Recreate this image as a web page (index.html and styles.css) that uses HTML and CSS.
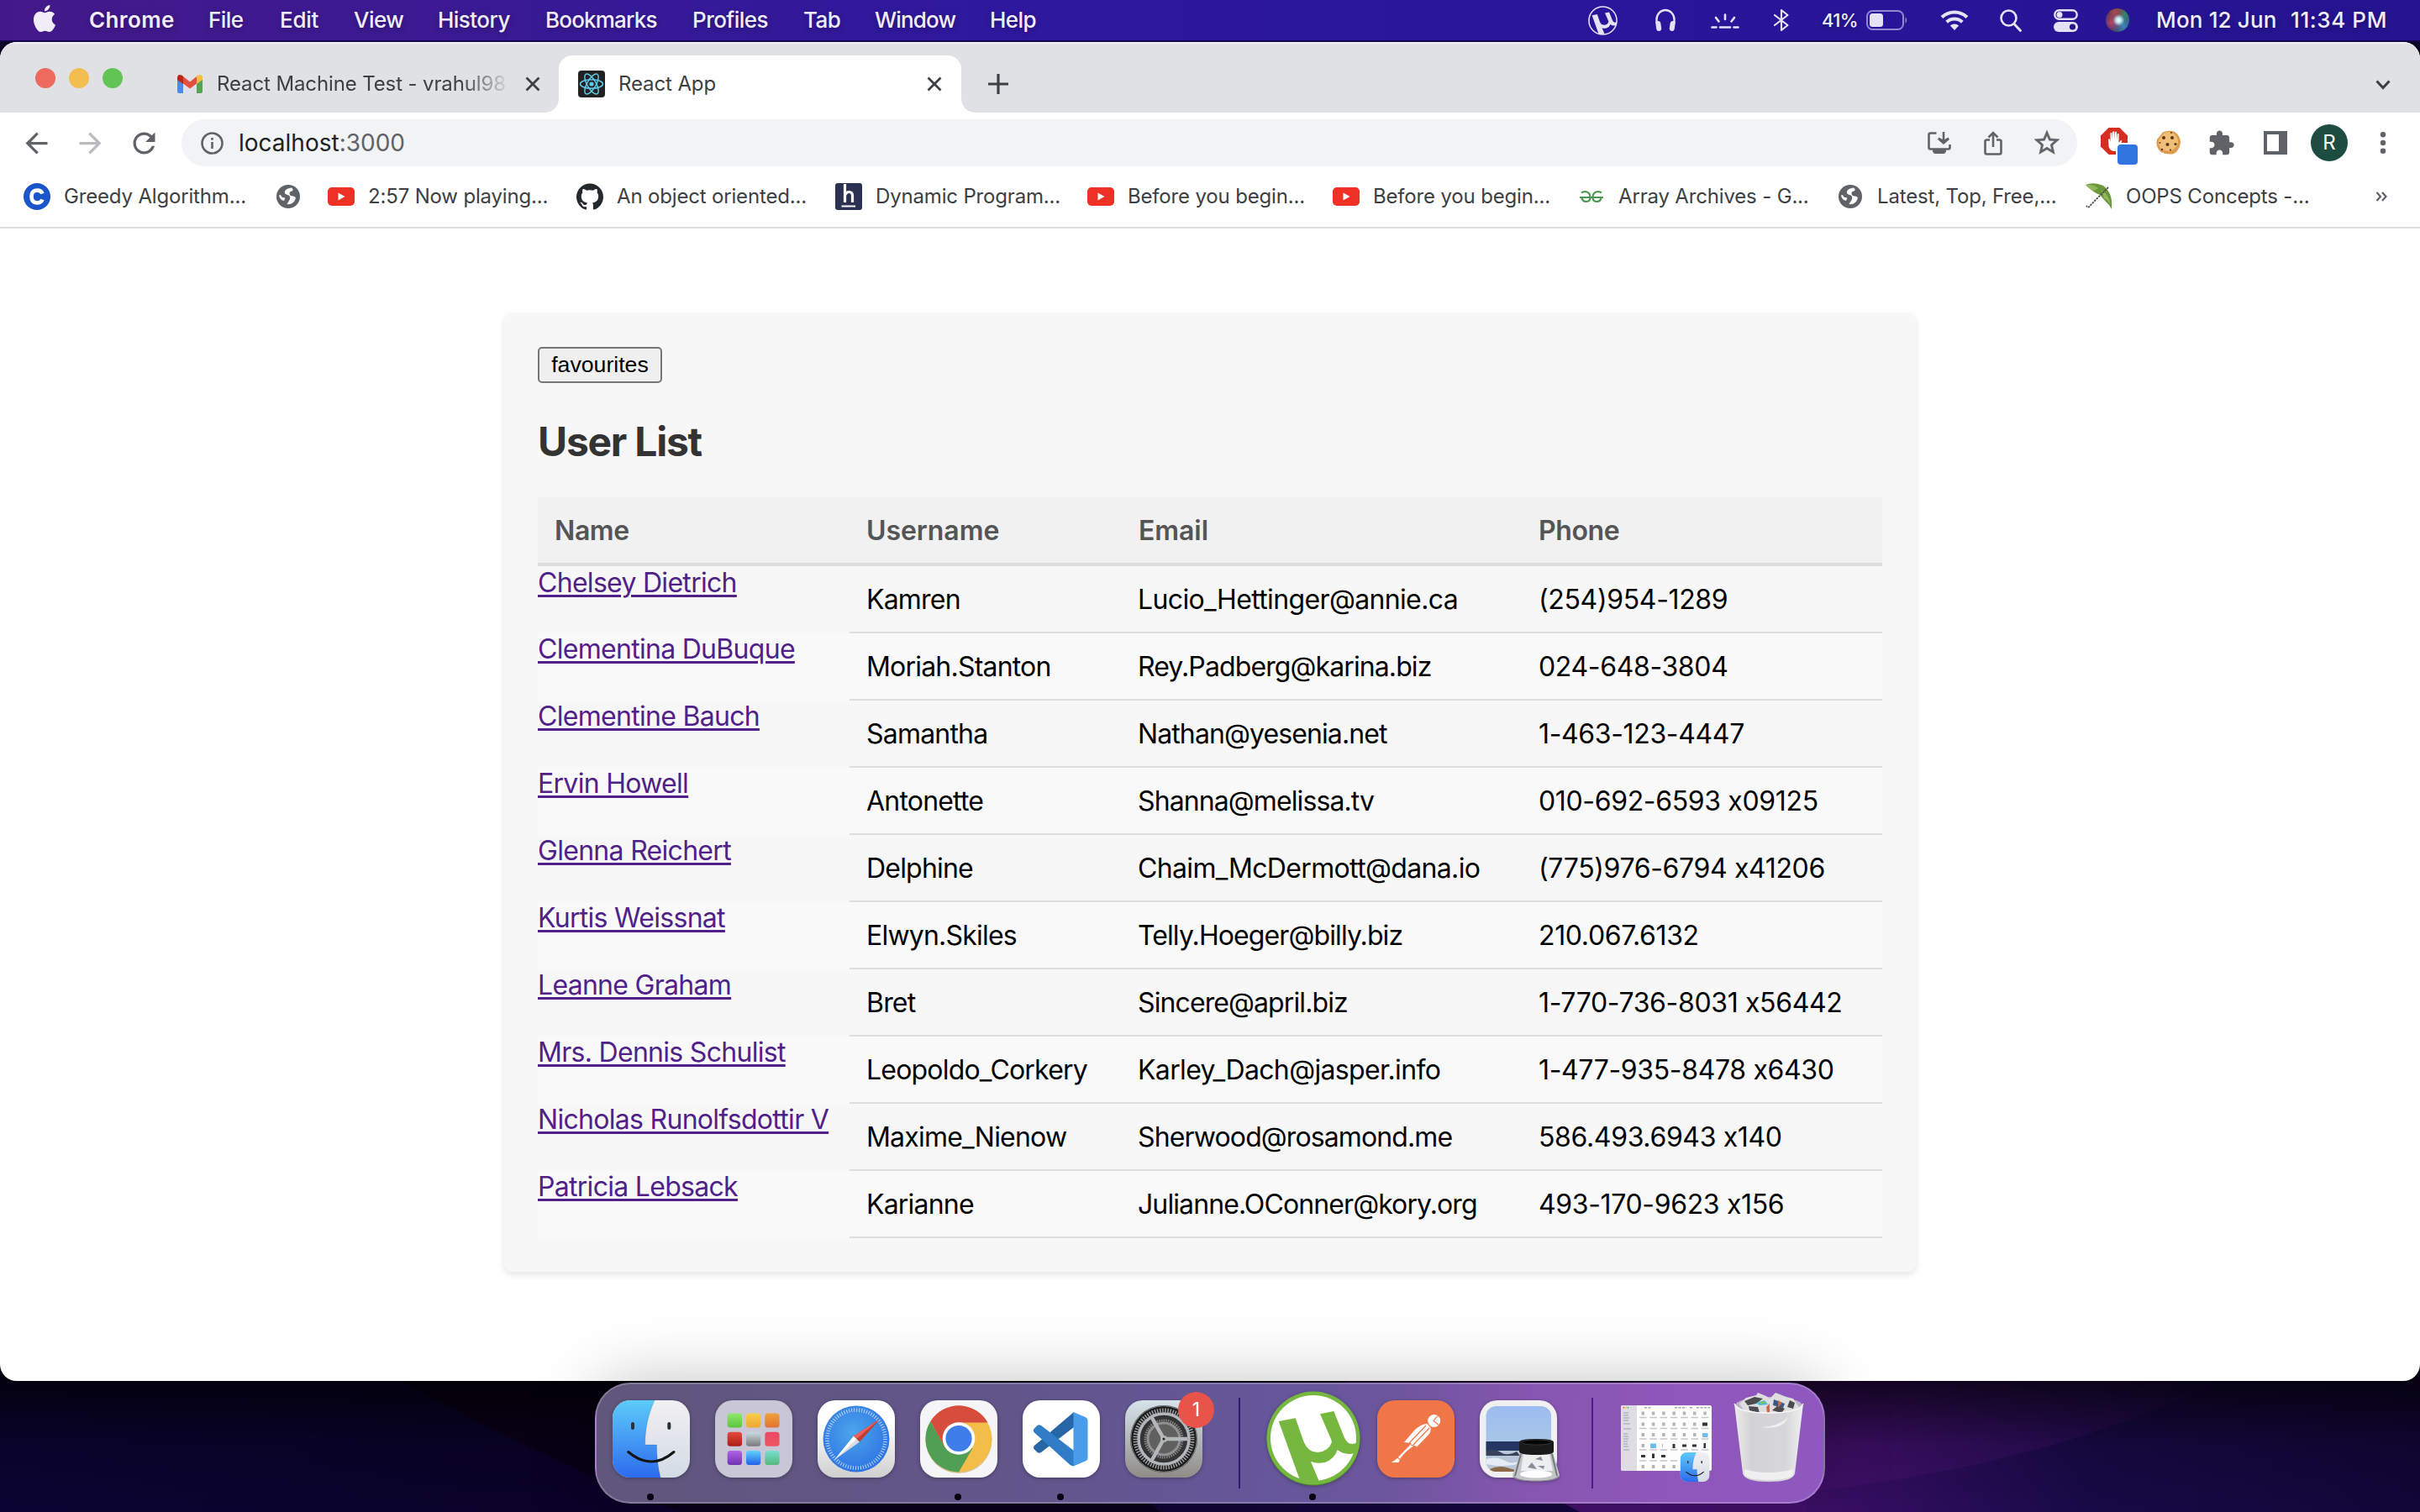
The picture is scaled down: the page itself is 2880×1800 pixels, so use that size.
FILE: index.html
```html
<!DOCTYPE html>
<html lang="en">
<head>
<meta charset="utf-8">
<title>React App</title>
<link rel="stylesheet" href="styles.css">
</head>
<body>
<svg class="defs" width="0" height="0" aria-hidden="true">
  <defs>
    <linearGradient id="gFinderBlue" x1="0" y1="0" x2="0" y2="1"><stop offset="0" stop-color="#5ccbfa"/><stop offset="1" stop-color="#2d6bee"/></linearGradient>
    <linearGradient id="gFinderWhite" x1="0" y1="0" x2="0" y2="1"><stop offset="0" stop-color="#f1f0f2"/><stop offset="1" stop-color="#d3dbe6"/></linearGradient>
    <linearGradient id="gSafariPlate" x1="0" y1="0" x2="0" y2="1"><stop offset=".3" stop-color="#fff"/><stop offset="1" stop-color="#cfcfcf"/></linearGradient>
    <radialGradient id="gSafari" cx=".45" cy=".4" r=".6"><stop offset="0" stop-color="#4ba6ec"/><stop offset="1" stop-color="#2f74e2"/></radialGradient>
    <linearGradient id="gSettings" x1="0" y1="0" x2="0" y2="1"><stop offset="0" stop-color="#d6e3ea"/><stop offset="1" stop-color="#8f8c88"/></linearGradient>
    <linearGradient id="gSky" x1="0" y1="0" x2="0" y2="1"><stop offset="0" stop-color="#9cbcf1"/><stop offset="1" stop-color="#a9c6e6"/></linearGradient>
    <linearGradient id="gTrash" x1="0" y1="0" x2="1" y2="0"><stop offset="0" stop-color="#ececec"/><stop offset=".25" stop-color="#d3d2d4"/><stop offset=".75" stop-color="#d7d6d8"/><stop offset="1" stop-color="#f0f0f1"/></linearGradient>
    <linearGradient id="l1" x1="0" y1="0" x2="0" y2="1"><stop offset="0" stop-color="#8fe96a"/><stop offset="1" stop-color="#5cc53c"/></linearGradient>
    <linearGradient id="l2" x1="0" y1="0" x2="0" y2="1"><stop offset="0" stop-color="#f7cd4b"/><stop offset="1" stop-color="#f0a733"/></linearGradient>
    <linearGradient id="l3" x1="0" y1="0" x2="0" y2="1"><stop offset="0" stop-color="#eea23c"/><stop offset="1" stop-color="#df7433"/></linearGradient>
    <linearGradient id="l4" x1="0" y1="0" x2="0" y2="1"><stop offset="0" stop-color="#e64a3b"/><stop offset="1" stop-color="#a91f16"/></linearGradient>
    <linearGradient id="l5" x1="0" y1="0" x2="0" y2="1"><stop offset="0" stop-color="#cddae3"/><stop offset="1" stop-color="#77797b"/></linearGradient>
    <linearGradient id="l6" x1="0" y1="0" x2="0" y2="1"><stop offset="0" stop-color="#ea4866"/><stop offset="1" stop-color="#ee5560"/></linearGradient>
    <linearGradient id="l7" x1="0" y1="0" x2="0" y2="1"><stop offset="0" stop-color="#b263e6"/><stop offset="1" stop-color="#7130b4"/></linearGradient>
    <linearGradient id="l8" x1="0" y1="0" x2="0" y2="1"><stop offset="0" stop-color="#60d2fa"/><stop offset="1" stop-color="#2260ea"/></linearGradient>
    <linearGradient id="l9" x1="0" y1="0" x2="0" y2="1"><stop offset="0" stop-color="#7adfcf"/><stop offset="1" stop-color="#53b97c"/></linearGradient>
    <clipPath id="plate"><rect width="92" height="92" rx="21"/></clipPath>
    <clipPath id="photo"><rect x="7.500" y="7" width="77.500" height="78" rx="12"/></clipPath>
    <symbol id="finder" viewBox="0 0 92 92">
      <g clip-path="url(#plate)">
        <rect width="92" height="92" fill="url(#gFinderWhite)"/>
        <path d="M0 0H50C42 18 38.700 35 38.700 53H52.500C52.500 67 54 80 57 92H0Z" fill="url(#gFinderBlue)"/>
        <path d="M50 0C42 18 38.700 35 38.700 53H52.500C52.500 67 54 80 57 92" fill="none" stroke="#000" stroke-opacity=".12"/>
      </g>
      <path d="M24 28V33M67.300 28V33" stroke="#2a3038" stroke-width="4" stroke-linecap="round"/>
      <path d="M18.700 61.500Q46 84.500 73 61.500" fill="none" stroke="#141414" stroke-width="3" stroke-linecap="round"/>
    </symbol>
    <symbol id="mu" viewBox="0 0 112 112">
      <path d="M14.700 36L34.700 32.300L44.700 60.700Q50 73 61 73Q74 72 78 60.700L77 57L64 27.300L80.300 24L92.300 54Q96 63 102 63L108 62Q108 68 105 74Q94 77 84.700 70Q81 81 69.700 85Q60 87 53 84L63 108L40 106Z"/>
    </symbol>
    <symbol id="youtube" viewBox="0 0 32 32">
      <rect y="5" width="32" height="22" rx="5" fill="#ee3124"/><path d="M12.500 11.500V20.500L20.500 16Z" fill="#fff"/>
    </symbol>
    <symbol id="globe" viewBox="0 0 32 32">
      <circle cx="15" cy="16" r="14" fill="#5f6368"/>
      <path d="M19 5.500Q13 6 11 9.500Q10 13 14 14Q18 14.500 17 19L13.500 25Q21 26 23.500 19Q25 16 20.500 15.500Q16.500 15.500 16.500 12Q16.500 10 19.500 9.500Q22 8 19 5.500ZM4 14.500Q5 20 10 21L11.500 17.500Q7 17.500 6 14Z" fill="#fff"/>
    </symbol>
  </defs>
</svg>

<header class="menubar">
  <nav class="menus">
    <svg class="apple" viewBox="0 0 24 24"><path d="M12.152 6.896c-.948 0-2.415-1.078-3.960-1.040-2.040.027-3.910 1.183-4.961 3.014-2.117 3.675-.546 9.103 1.519 12.090 1.013 1.454 2.208 3.090 3.792 3.039 1.520-.065 2.090-.987 3.935-.987 1.831 0 2.350.987 3.960.948 1.637-.026 2.676-1.480 3.676-2.948 1.156-1.688 1.636-3.325 1.662-3.415-.039-.013-3.182-1.221-3.220-4.857-.026-3.040 2.480-4.494 2.597-4.559-1.429-2.090-3.623-2.324-4.390-2.376-2-.156-3.675 1.090-4.610 1.090zM15.530 3.830c.843-1.012 1.400-2.427 1.245-3.830-1.207.052-2.662.805-3.532 1.818-.780.896-1.454 2.338-1.273 3.714 1.338.104 2.715-.688 3.559-1.701"/></svg>
    <b>Chrome</b><span>File</span><span class="loose">Edit</span><span>View</span><span>History</span><span class="tight">Bookmarks</span><span>Profiles</span><span>Tab</span><span class="tight">Window</span><span>Help</span>
  </nav>
  <div class="status">
    <svg class="s-mu" viewBox="0 0 112 112"><circle cx="56" cy="56" r="53" fill="none" stroke="#e6e2f5" stroke-width="5"/><use href="#mu" width="112" height="112"/></svg>
    <svg class="s-head" viewBox="0 0 28 28"><path d="M3.500 18V13A10.500 11 0 0 1 24.500 13V18" fill="none" stroke="#e6e2f5" stroke-width="2.400"/><rect x="2.800" y="15" width="6" height="12" rx="3" transform="rotate(-8 6 21)"/><rect x="19.200" y="15" width="6" height="12" rx="3" transform="rotate(8 22 21)"/></svg>
    <svg class="s-key" viewBox="0 0 34 20"><path d="M17 1.500V7M6 5L9.500 9.500M28 5L24.500 9.500M1.500 16.500H6.500M11 16.500H23M27.500 16.500H32.500" fill="none" stroke="#e6e2f5" stroke-width="2.600" stroke-linecap="round"/></svg>
    <svg class="s-bt" viewBox="0 0 20 28"><path d="M2 8L17.500 20L10 26V2L17.500 8L2 20" fill="none" stroke="#e6e2f5" stroke-width="2.200" stroke-linejoin="round" stroke-linecap="round"/></svg>
    <span class="pct">41%</span>
    <svg class="s-bat" viewBox="0 0 50 24"><rect x="1" y="1" width="43" height="22" rx="6.500" fill="none" stroke="#9387cf" stroke-width="2"/><rect x="4" y="4" width="16" height="16" rx="3.500"/><path d="M46.500 8Q50 12 46.500 16Z" fill="#9387cf"/></svg>
    <svg class="s-wifi" viewBox="0 0 34 26"><g fill="none" stroke="#e6e2f5" stroke-width="4"><path d="M2 9.500A21.500 21.500 0 0 1 32 9.500"/><path d="M7.700 15.300A13.500 13.500 0 0 1 26.300 15.300"/></g><path d="M17 25L11.800 19.600A7.500 7.500 0 0 1 22.200 19.600Z"/></svg>
    <svg class="s-find" viewBox="0 0 26 27"><circle cx="10.500" cy="10.500" r="9" fill="none" stroke="#e6e2f5" stroke-width="2.600"/><path d="M17 17.500L24.500 25.500" stroke="#e6e2f5" stroke-width="3" stroke-linecap="round"/></svg>
    <svg class="s-cc" viewBox="0 0 29 27"><rect x="1.300" y="1.300" width="26.400" height="10.400" rx="5.200" fill="none" stroke="#e6e2f5" stroke-width="2.400"/><circle cx="7" cy="6.500" r="3.500"/><rect y="15" width="29" height="12" rx="6"/><circle cx="22.500" cy="21" r="3.600" fill="#26158f"/></svg>
    <span class="siri"></span>
    <span class="date">Mon 12 Jun</span><span class="time">11:34 PM</span>
  </div>
</header>

<main class="window">
  <div class="tabstrip">
    <div class="lights"><i class="red"></i><i class="yellow"></i><i class="green"></i></div>
    <div class="tab">
      <svg class="gmail" viewBox="0 0 30 22"><path d="M0 3V20Q0 22 2 22H7V10Z" fill="#4e87ee"/><path d="M30 3V20Q30 22 28 22H23V10Z" fill="#53a551"/><path d="M0 4V3Q1-2 6 1L7 2V11L0 6Z" fill="#b9271b"/><path d="M7 2L15 8.500L23 2V10.500L15 16.500L7 10.500Z" fill="#e34e3e"/><path d="M30 4V3Q29-2 24 1L23 2V11L30 6Z" fill="#f4bd3f"/></svg>
      <span class="tab-title faded">React Machine Test - vrahul98</span>
      <svg class="close" viewBox="0 0 18 18"><path d="M1.500 1.500L16.500 16.500M16.500 1.500L1.500 16.500"/></svg>
    </div>
    <div class="tab active">
      <svg class="react" viewBox="0 0 32 32"><rect width="32" height="32" rx="4" fill="#222"/><g fill="none" stroke="#61c9e8" stroke-width="1.500"><ellipse cx="16" cy="16" rx="13.500" ry="5.200" transform="rotate(0 16 16)"/><ellipse cx="16" cy="16" rx="13.500" ry="5.200" transform="rotate(60 16 16)"/><ellipse cx="16" cy="16" rx="13.500" ry="5.200" transform="rotate(120 16 16)"/></g><circle cx="16" cy="16" r="2.600" fill="#61c9e8"/></svg>
      <span class="tab-title">React App</span>
      <svg class="close" viewBox="0 0 18 18"><path d="M1.500 1.500L16.500 16.500M16.500 1.500L1.500 16.500"/></svg>
    </div>
    <svg class="plus" viewBox="0 0 24 24"><path d="M12 0V24M0 12H24" stroke="#3c4043" stroke-width="3.200"/></svg>
    <svg class="chevron" viewBox="0 0 18 12"><path d="M1.500 1.500L9 9.500L16.500 1.500" fill="none" stroke="#3c4043" stroke-width="3"/></svg>
  </div>

  <div class="toolbar">
    <svg class="nav" viewBox="0 0 24 24"><path d="M20 11H7.830l5.590-5.590L12 4l-8 8 8 8 1.410-1.410L7.830 13H20v-2z"/></svg>
    <svg class="nav disabled" viewBox="0 0 24 24"><path d="M4 11H16.170l-5.590-5.590L12 4l8 8-8 8-1.410-1.410L16.170 13H4v-2z"/></svg>
    <svg class="nav" viewBox="0 0 24 24"><path d="M17.650 6.350C16.200 4.900 14.210 4 12 4c-4.420 0-7.990 3.580-7.990 8s3.570 8 7.990 8c3.730 0 6.840-2.550 7.730-6h-2.080c-.820 2.330-3.040 4-5.650 4-3.310 0-6-2.690-6-6s2.690-6 6-6c1.660 0 3.140.690 4.220 1.780L13 11h7V4l-2.350 2.350z"/></svg>
    <div class="omnibox">
      <svg class="info" viewBox="0 0 27 27"><circle cx="13.500" cy="13.500" r="12" fill="none" stroke="#5f6368" stroke-width="2.600"/><path d="M13.500 12V20M13.500 7V9.800" stroke="#5f6368" stroke-width="2.600"/></svg>
      <span class="url">localhost<span>:3000</span></span>
      <svg class="o-install" viewBox="0 0 28 26"><path d="M10.500 1.500H3.500Q1.500 1.500 1.500 3.500V18.500Q1.500 20.500 3.500 20.500H24.500Q26.500 20.500 26.500 18.500V15" fill="none" stroke="#5f6368" stroke-width="2.600"/><path d="M6 21H22V23.500L20 26H8L6 23.500ZM17.700 0H20.300V9L24.500 6.500L26 9L19 15L12 9L13.500 6.500L17.700 9Z" fill="#5f6368"/></svg>
      <svg class="o-share" viewBox="0 0 22 29"><path d="M7 10.500H3.500Q1.500 10.500 1.500 12.500V25.500Q1.500 27.500 3.500 27.500H18.500Q20.500 27.500 20.500 25.500V12.500Q20.500 10.500 18.500 10.500H15M11 19V3M5.500 7.500L11 2L16.500 7.500" fill="none" stroke="#5f6368" stroke-width="2.600"/></svg>
      <svg class="o-star" viewBox="0 0 24 24"><path d="M22 9.240l-7.190-.620L12 2 9.190 8.630 2 9.240l5.460 4.730L5.820 21 12 17.270 18.180 21l-1.630-7.030L22 9.240zM12 15.400l-3.760 2.270 1-4.280-3.320-2.880 4.380-.380L12 6.100l1.710 4.040 4.380.380-3.320 2.880 1 4.280L12 15.400z" fill="#5f6368" stroke="#5f6368" stroke-width=".3"/></svg>
    </div>
    <svg class="e-abp" viewBox="0 0 44 44"><path d="M9.500 0H22.500L32 9.500V22.500L22.500 32H9.500L0 22.500V9.500Z" fill="#d52e20"/><path d="M9 14Q10 12.500 11 14L11.500 17V6.500Q12.600 5 13.500 6.500V14.500L14.200 4.800Q15.300 3.500 16.300 4.800V14.500L17 5.200Q18 4 19 5.200V15L19.700 7.500Q20.800 6 21.600 7.500V18L23.500 15.500Q25 14.500 25.300 16L21.500 25Q20 28 16 28Q10.500 27.500 9.500 22Z" fill="#fff"/><rect x="18" y="18" width="28" height="28" rx="4" fill="#fff"/><rect x="20" y="20" width="24" height="24" rx="4" fill="#3175e0"/></svg>
    <svg class="e-cookie" viewBox="0 0 30 28"><path d="M8 1.500Q15-1.500 22 1Q29 6 29 14Q27 24 21 27Q13 29 5 24.500Q-1 18 1 10Z" fill="#dd9a4d"/><path d="M9 2.500Q15 0 20.500 2.500Q27 8 26 14Q23 22 18 23.500Q11 25 5.500 21Q1.500 15 3.500 10Z" fill="#efbf78"/><g fill="#5b3317"><circle cx="9" cy="8" r="2"/><circle cx="19" cy="8" r="2"/><circle cx="13.500" cy="16" r="2"/><circle cx="23" cy="15.500" r="1.600"/><circle cx="7" cy="22" r="1.200"/><circle cx="4.500" cy="14" r=".9"/><circle cx="17" cy="22.500" r="1.100"/><circle cx="18" cy="2" r="1"/></g></svg>
    <svg class="e-puzzle" viewBox="0 0 24 24"><path d="M20.500 11H19V7c0-1.100-.900-2-2-2h-4V3.500C13 2.120 11.880 1 10.500 1S8 2.120 8 3.500V5H4c-1.100 0-1.990.900-1.990 2v3.800H3.500c1.490 0 2.700 1.210 2.700 2.700s-1.210 2.700-2.700 2.700H2V20c0 1.100.900 2 2 2h3.800v-1.500c0-1.490 1.210-2.700 2.700-2.700 1.490 0 2.700 1.210 2.700 2.700V22H17c1.100 0 2-.900 2-2v-4h1.500c1.380 0 2.500-1.120 2.500-2.500S21.880 11 20.500 11z" fill="#5f6368"/></svg>
    <svg class="e-panel" viewBox="0 0 28 28"><path d="M0 0H28V28H0ZM4 4V24H18V4Z" fill="#5f6368" fill-rule="evenodd"/></svg>
    <span class="avatar">R</span>
    <svg class="e-more" viewBox="0 0 8 26"><g fill="#5f6368"><circle cx="4" cy="3.300" r="3.200"/><circle cx="4" cy="13" r="3.200"/><circle cx="4" cy="22.700" r="3.200"/></g></svg>
  </div>

  <div class="bookmarks">
    <div class="bm"><svg viewBox="0 0 32 32"><circle cx="16" cy="16" r="16" fill="#1a56c9"/><path d="M22.500 12.500Q21 8.500 16 8.500Q9.500 9 9.500 16Q9.500 23 16 23.500Q21 23.500 22.500 19.500" fill="none" stroke="#fff" stroke-width="4.600"/></svg><span>Greedy Algorithm...</span></div>
    <div class="bm"><svg viewBox="0 0 32 32"><use href="#globe"/></svg></div>
    <div class="bm"><svg viewBox="0 0 32 32"><use href="#youtube"/></svg><span>2:57 Now playing...</span></div>
    <div class="bm"><svg viewBox="0 0 24 24"><path fill="#24292e" d="M12 .297c-6.630 0-12 5.373-12 12 0 5.303 3.438 9.800 8.205 11.385.6.113.820-.258.820-.577 0-.285-.010-1.040-.015-2.040-3.338.724-4.042-1.610-4.042-1.610C4.422 18.070 3.633 17.700 3.633 17.700c-1.087-.744.084-.729.084-.729 1.205.084 1.838 1.236 1.838 1.236 1.070 1.835 2.809 1.305 3.495.998.108-.776.417-1.305.760-1.605-2.665-.3-5.466-1.332-5.466-5.930 0-1.310.465-2.380 1.235-3.220-.135-.303-.540-1.523.105-3.176 0 0 1.005-.322 3.300 1.230.960-.267 1.980-.399 3-.405 1.020.006 2.040.138 3 .405 2.280-1.552 3.285-1.230 3.285-1.230.645 1.653.240 2.873.120 3.176.765.840 1.230 1.910 1.230 3.220 0 4.610-2.805 5.625-5.475 5.920.420.360.810 1.096.810 2.220 0 1.606-.015 2.896-.015 3.286 0 .315.210.690.825.570C20.565 22.092 24 17.592 24 12.297c0-6.627-5.373-12-12-12"/></svg><span>An object oriented...</span></div>
    <div class="bm"><svg viewBox="0 0 32 32"><rect width="32" height="32" rx="3" fill="#2b3152"/><path d="M11.500 1V23M11.500 14.500Q13 10.500 16.500 10.500Q20.500 10.500 20.500 15V23" fill="none" stroke="#fff" stroke-width="3.200"/><path d="M7.500 27.500H24" stroke="#fff" stroke-width="2.200"/></svg><span>Dynamic Program...</span></div>
    <div class="bm"><svg viewBox="0 0 32 32"><use href="#youtube"/></svg><span>Before you begin...</span></div>
    <div class="bm"><svg viewBox="0 0 32 32"><use href="#youtube"/></svg><span>Before you begin...</span></div>
    <div class="bm"><svg viewBox="0 0 32 32"><g fill="none" stroke="#4c9852" stroke-width="2.200"><path d="M4 11.500Q7 9.500 10.500 10.500Q14.500 12 14.500 17Q14.500 22 9.500 22Q5 21.500 4.500 17.500M28 11.500Q25 9.500 21.500 10.500Q17.500 12 17.500 17Q17.500 22 22.500 22Q27 21.500 27.500 17.500M2 17H30"/></g></svg><span>Array Archives - G...</span></div>
    <div class="bm"><svg viewBox="0 0 32 32"><use href="#globe" x="1"/></svg><span>Latest, Top, Free,...</span></div>
    <div class="bm"><svg viewBox="0 0 32 32"><path d="M0 2Q10-2 21 3Q33 12 31 31Q28 25 24 22L17 14Q9 11 0 2Z" fill="#6b9838"/><path d="M0 2Q8 1 15 6Q12 8 10 9Q4 7 0 2ZM19 8Q28 15 30 26Q27 20 22 18Z" fill="#94b75e"/><path d="M27 5L7 25Q3 31 1 27" fill="none" stroke="#4b4b4b" stroke-width="1.800" stroke-dasharray="2.500 1"/></svg><span>OOPS Concepts -...</span></div>
    <svg class="more" viewBox="0 0 14 12"><path d="M1.500 1L6 6L1.500 11M8 1L12.500 6L8 11" fill="none" stroke="#5f6368" stroke-width="2.200"/></svg>
  </div>

  <section class="page">
    <div class="card">
      <button class="fav">favourites</button>
      <h2>User List</h2>
      <table>
        <colgroup><col class="c-name"><col class="c-user"><col class="c-mail"><col class="c-phone"></colgroup>
        <thead><tr><th class="snug">Name</th><th>Username</th><th>Email</th><th class="snug">Phone</th></tr></thead>
        <tbody>
          <tr><td><a href="#">Chelsey Dietrich</a></td><td>Kamren</td><td class="wide">Lucio_Hettinger@annie.ca</td><td>(254)954-1289</td></tr>
          <tr><td><a href="#">Clementina DuBuque</a></td><td>Moriah.Stanton</td><td>Rey.Padberg@karina.biz</td><td>024-648-3804</td></tr>
          <tr><td><a href="#">Clementine Bauch</a></td><td>Samantha</td><td>Nathan@yesenia.net</td><td>1-463-123-4447</td></tr>
          <tr><td><a href="#">Ervin Howell</a></td><td>Antonette</td><td>Shanna@melissa.tv</td><td>010-692-6593 x09125</td></tr>
          <tr><td><a href="#">Glenna Reichert</a></td><td>Delphine</td><td class="wide">Chaim_McDermott@dana.io</td><td>(775)976-6794 x41206</td></tr>
          <tr><td><a href="#">Kurtis Weissnat</a></td><td>Elwyn.Skiles</td><td>Telly.Hoeger@billy.biz</td><td>210.067.6132</td></tr>
          <tr><td><a href="#">Leanne Graham</a></td><td>Bret</td><td>Sincere@april.biz</td><td>1-770-736-8031 x56442</td></tr>
          <tr><td><a href="#">Mrs. Dennis Schulist</a></td><td>Leopoldo_Corkery</td><td class="wide">Karley_Dach@jasper.info</td><td>1-477-935-8478 x6430</td></tr>
          <tr><td><a href="#">Nicholas Runolfsdottir V</a></td><td>Maxime_Nienow</td><td>Sherwood@rosamond.me</td><td>586.493.6943 x140</td></tr>
          <tr><td><a href="#">Patricia Lebsack</a></td><td>Karianne</td><td>Julianne.OConner@kory.org</td><td>493-170-9623 x156</td></tr>
        </tbody>
      </table>
    </div>
  </section>
</main>

<footer class="desktop">
  <svg class="wallpaper" viewBox="0 0 2880 176" preserveAspectRatio="none">
    <defs>
      <linearGradient id="w1" x1="0" x2="1" y1="0" y2="0"><stop offset="0" stop-color="#0b0433"/><stop offset=".25" stop-color="#0a0228"/><stop offset=".6" stop-color="#160640"/><stop offset="1" stop-color="#120639"/></linearGradient>
      <linearGradient id="w2" x1="0" x2="1" y1="0" y2="0"><stop offset="0" stop-color="#4a1173"/><stop offset=".55" stop-color="#43106d"/><stop offset=".75" stop-color="#2f0e5c"/><stop offset="1" stop-color="#1a0946"/></linearGradient>
      <linearGradient id="w3" gradientUnits="userSpaceOnUse" x1="2150" x2="2880" y1="0" y2="0"><stop offset="0" stop-color="#3d0f69"/><stop offset=".2" stop-color="#2b0d5a"/><stop offset=".45" stop-color="#180a47"/><stop offset="1" stop-color="#110637"/></linearGradient>
      <linearGradient id="w4" x1="0" x2="0" y1="0" y2="1"><stop offset=".1" stop-color="#000" stop-opacity=".7"/><stop offset=".55" stop-color="#000" stop-opacity=".15"/><stop offset="1" stop-color="#000" stop-opacity="0"/></linearGradient>
    </defs>
    <rect width="2880" height="176" fill="url(#w1)"/>
    <path d="M478 20Q640 110 810 176H1380L1200 20Z" fill="#080119"/>
    <path d="M1600 20H2640V176H1880Z" fill="url(#w2)"/>
    <path d="M2640 20Q2440 120 2150 152V176H2880V20Z" fill="url(#w3)"/>
    <rect width="2880" height="176" fill="url(#w4)"/>
  </svg>
  <div class="dock">
    <div class="app running"><svg viewBox="0 0 92 92"><use href="#finder"/></svg></div>
    <div class="app"><svg viewBox="0 0 92 92"><rect width="92" height="92" rx="21" fill="#c9c6d5"/>
      <rect x="14.700" y="15.500" width="17.300" height="17" rx="3.500" fill="url(#l1)"/><rect x="37" y="15.500" width="17.300" height="17" rx="3.500" fill="url(#l2)"/><rect x="59.300" y="15.500" width="17.300" height="17" rx="3.500" fill="url(#l3)"/>
      <rect x="14.700" y="37.800" width="17.300" height="17" rx="3.500" fill="url(#l4)"/><rect x="37" y="37.800" width="17.300" height="17" rx="3.500" fill="url(#l5)"/><rect x="59.300" y="37.800" width="17.300" height="17" rx="3.500" fill="url(#l6)"/>
      <rect x="14.700" y="60" width="17.300" height="17" rx="3.500" fill="url(#l7)"/><rect x="37" y="60" width="17.300" height="17" rx="3.500" fill="url(#l8)"/><rect x="59.300" y="60" width="17.300" height="17" rx="3.500" fill="url(#l9)"/></svg></div>
    <div class="app"><svg viewBox="0 0 92 92"><rect width="92" height="92" rx="21" fill="url(#gSafariPlate)"/><circle cx="46" cy="46" r="39.500" fill="url(#gSafari)"/><circle cx="46" cy="46" r="34.500" fill="none" stroke="#d5e8fb" stroke-width="4.500" stroke-dasharray="1 2.010" opacity=".85"/><path d="M20 71L43 42.500L50 49.500Z" fill="#d9dde2"/><path d="M20 71L43 42.500L46.500 46Z" fill="#fff"/><path d="M74 22.500L43 42.500L50 49.500Z" fill="#c13b2e"/><path d="M74 22.500L43 42.500L46.500 46Z" fill="#ee6058"/></svg></div>
    <div class="app running"><svg viewBox="0 0 92 92"><rect width="92" height="92" rx="21" fill="#f5f5f8"/><circle cx="46" cy="47.500" r="39.500" fill="#b9913a" opacity=".5"/><circle cx="46" cy="46" r="39.500" fill="#f3bd49"/><path d="M46 26.500H80.500A39.500 39.500 0 0 0 12.500 25L29 56L46 46Z" fill="#d64c3d"/><path d="M12.500 25A39.500 39.500 0 0 0 46 85.500L62.500 57L46 46L29.200 56Z" fill="#519f55"/><circle cx="46" cy="45.500" r="19.300" fill="#fff"/><circle cx="46" cy="45.500" r="15.600" fill="#3f7de9"/></svg></div>
    <div class="app running"><svg viewBox="0 0 92 92"><rect width="92" height="92" rx="21" fill="#fff"/><path d="M61 14L14 54Q12 56 13.500 58L17.500 62Q19.500 63.500 22 62L61 32Z" fill="#2666a6"/><path d="M22 30Q19.500 28.500 17.500 30L13.500 34Q12 36 14 38.500L56 76.500Q59 79 61 78V60Z" fill="#317cc6"/><path d="M60.500 14L75.500 20.500Q77.500 21.500 77.500 24V68.500Q77.500 71 75.500 72L60.500 78.500Z" fill="#489cea"/></svg></div>
    <div class="app"><svg viewBox="0 0 92 92"><rect width="92" height="92" rx="21" fill="url(#gSettings)"/><circle cx="46" cy="46" r="40" fill="#1c1c1c"/><circle cx="46" cy="46" r="39.300" fill="none" stroke="#c9cdd0" stroke-width="1" opacity=".6"/><circle cx="46" cy="46" r="34" fill="none" stroke="#9c9fa1" stroke-width="5" stroke-dasharray="1.500 1.600"/><circle cx="46" cy="46" r="30" fill="#343434" stroke="#b4b7b9" stroke-width="3.500"/><circle cx="46" cy="46" r="22" fill="none" stroke="#85878a" stroke-width="3" stroke-dasharray="1.500 1.200"/><circle cx="46" cy="46" r="19" fill="#60605e" stroke="#8f9193" stroke-width="3"/><path d="M46 46H74M46 46L32 21M46 46L32 71" stroke="#b4b7b9" stroke-width="4.500"/><circle cx="46" cy="46" r="4" fill="#b4b7b9"/><circle cx="46" cy="46" r="1.500" fill="#222"/></svg><span class="badge">1</span></div>
    <i class="sep"></i>
    <div class="app running torrent"><svg viewBox="0 0 112 112"><circle cx="56" cy="57" r="55.500" fill="#4b8f28"/><circle cx="56" cy="56" r="55.500" fill="#76b83f"/><circle cx="56" cy="56" r="51" fill="#fff"/><use href="#mu" width="112" height="112" fill="#76b83f"/></svg></div>
    <div class="app postman"><svg viewBox="0 0 92 92"><rect width="92" height="92" rx="21" fill="#f07648"/><g fill="#fff"><circle cx="67.700" cy="24.500" r="7.500"/><path d="M44 36Q52 28 59.300 28L63.700 33Q64 38 61 41L47 55.700L44 54Q34 60 27.700 69L25.500 74H17L22.700 70L39.300 53L41 51L32 50Z"/></g><path d="M73 17L67 24.500L74 30M58 30L38 51M62 33L43 53M40 53L48 56M24 68L28 71" stroke="#f07648" stroke-width="1.200" fill="none"/></svg></div>
    <div class="app"><svg viewBox="0 0 92 92"><rect width="92" height="92" rx="21" fill="#f0f0f1"/><g clip-path="url(#photo)"><rect x="7" y="7" width="79" height="43" fill="url(#gSky)"/><rect x="7" y="49" width="79" height="37" fill="#b9c7da"/><rect x="7" y="49" width="79" height="11" fill="#253563"/><path d="M7 60Q18 57 25 62T44 61L48 66H7Z" fill="#39425a"/><path d="M8 70Q20 66 30 72T48 70L46 76Q26 80 8 76Z" fill="#e8edf3"/><path d="M12 82Q22 77 32 80L46 84V87H12Z" fill="#8a6a48"/></g><path d="M48 62H87L95 89Q95 96 67 96Q39 96 39 89Z" fill="#c3c7ca"/><path d="M52 64H83L87 84H49Z" fill="#eceef0"/><path d="M49 64L42 90M86 64L92 90" stroke="#77797b" stroke-width="2"/><path d="M57 80L62 74L68 82ZM66 70L73 67L75 72ZM69 78L77 78L76 82Z" fill="#878e99"/><ellipse cx="67" cy="88" rx="19" ry="4.500" fill="#fff"/><path d="M40 90Q44 96 67 96Q90 96 94 90" fill="none" stroke="#8b8e90" stroke-width="1.200"/><path d="M47 50Q47 46 67.500 46Q88 46 88 50V61Q88 65 67.500 65Q47 65 47 61Z" fill="#1a1a1b"/><ellipse cx="67.500" cy="50" rx="18" ry="3" fill="#050505" stroke="#444" stroke-width=".7"/></svg></div>
    <i class="sep"></i>
    <svg class="thumb" viewBox="0 0 108 92"><rect width="108" height="78" rx="2" fill="#fdfdfd"/><path d="M2 0H19V78H2Q0 78 0 76V2Q0 0 2 0Z" fill="#dfdce3"/><circle cx="3.500" cy="2.700" r="1" fill="#ee6a5e"/><circle cx="6" cy="2.700" r="1" fill="#f5bd4f"/><circle cx="8.500" cy="2.700" r="1" fill="#61c554"/><path d="M28 2.700H36M64 2.700H78M82 2.700H86M90 2.700H106" stroke="#aaa" stroke-width="1.400" stroke-dasharray="3 1.500"/><path d="M3 9H9M3 12H9M3 15H10M3 18H9M3 22H11M3 28H12M3 34H8M3 37H9M3 40H9M3 43H8M3 46H8M3 49H9M3 53H10" stroke="#8fa2bd" stroke-width="1.200"/><g stroke="#b5b5b8" stroke-width="4" stroke-dasharray="3.500 8.800" fill="none"><path d="M24.500 9.500H106M24.500 22.500H98M24.500 35H98M24.500 48H50M24.500 73H68"/></g><g stroke="#c6c6ca" stroke-width="1.500" stroke-dasharray="8.500 3.800"><path d="M22 14.500H106M22 27.500H106M22 40H106M22 53H106M22 66H68"/></g><path d="M97 20.500H103V24.500H97ZM61.500 46H64.500V51H61.500ZM73 46.500H78V49.500H73ZM85 46.500H90V49.500H85ZM98.500 45H101V51H98.500ZM24 59H29V62H24ZM37 57.500H40V63H37ZM48 59H53V62H48Z" fill="#34343c"/><path d="M97 33H103.500V38H97ZM35 45.500H42V51H35Z" fill="#6fbdea"/><use href="#finder" x="70.600" y="56" width="35" height="35"/></svg>
    <svg class="trash" viewBox="0 0 82 108"><ellipse cx="41" cy="16" rx="40" ry="10" fill="#bfb2cc"/><path d="M6 14L14 7L26 4L28 1L38 5L42 8L49 1L62 6L70 8L77 18L70 26H14Z" fill="#dededf"/><path d="M12 11L24 6L34 8L26 14L16 16ZM17 17L28 18L30 25L18 22ZM45 22L52 16L60 20L56 25ZM66 10L72 13L70 20L63 18Z" fill="#4b4b50"/><path d="M26 13L36 10L40 15L30 16Z" fill="#4bbbe0"/><path d="M47 9L60 14L58 19L46 16Z" fill="#3a558f"/><path d="M52 10L57 13L52 19Z" fill="#c96a3d"/><path d="M30 12L37 11L34 15Z" fill="#7cc455"/><path d="M38 18L42 14V25L39 25Z" fill="#d9634b"/><path d="M0 14Q4 25 41 25Q78 25 82 14L72 97Q70 107 41 107Q12 107 10 97Z" fill="url(#gTrash)"/><path d="M30 42Q52 42 64 30Q58 46 30 42Z" fill="#f0f0f1"/><path d="M12 92Q40 100 70 92L70 98Q66 105 41 105Q14 105 12 98Z" fill="#f5f5f6" opacity=".8"/><path d="M0 14Q4 25 41 25Q78 25 82 14" fill="none" stroke="#fafafa" stroke-width="1.300"/></svg>
  </div>
</footer>
</body>
</html>
```
FILE: styles.css
```css
* { box-sizing: border-box; }

body {
  margin: 0;
  width: 2880px;
  height: 1800px;
  overflow: hidden;
  display: flex;
  flex-direction: column;
  background: #0b0326;
  font-family: Inter, "Noto Sans", sans-serif;
  font-feature-settings: "calt" 0;
}

svg { display: block; flex: none; overflow: visible; }
.defs { position: absolute; }

/* Menu bar */
.menubar {
  flex: none;
  height: 50px;
  display: flex;
  justify-content: space-between;
  align-items: center;
  border-bottom: 2px solid #150849;
  background: linear-gradient(90deg, #43198a 0, #3a1a94 20%, #2d189e 42%, #28159a 70%, #251491 100%);
  color: #f0edf8;
  font-size: 26px;
  font-weight: 500;
  white-space: nowrap;
  text-shadow: 0 2px 6px rgba(0, 0, 0, .3);
}
.menus {
  display: grid;
  grid-template-columns: 69px 142px 85px 88px 100px 128px 175px 132px 85px 137px 80px;
  align-items: center;
  padding-left: 37px;
  letter-spacing: -.021em;
  line-height: 32px;
}
.menus b { font-weight: 600; letter-spacing: .015em; }
.menus .loose { letter-spacing: -.011em; }
.menus .tight { letter-spacing: -.031em; }
.apple { width: 32px; height: 32px; margin-top: -4px; fill: #f0edf8; }

.status { display: flex; align-items: center; padding-right: 37px; fill: #e6e2f5; line-height: 32px; }
.s-mu { width: 35px; height: 35px; margin-right: 43px; }
.s-head { width: 28px; height: 28px; margin-right: 40px; }
.s-key { width: 34px; height: 20px; margin-right: 40px; margin-top: 3px; }
.s-bt { width: 20px; height: 28px; margin-right: 38px; }
.pct { font-size: 22px; letter-spacing: -.028em; width: 53px; }
.s-bat { width: 50px; height: 24px; margin-right: 38px; }
.s-wifi { width: 34px; height: 26px; margin-right: 37px; }
.s-find { width: 26px; height: 27px; margin-right: 38px; }
.s-cc { width: 29px; height: 27px; margin-right: 33px; }
.siri {
  width: 28px;
  height: 28px;
  margin-right: 32px;
  border-radius: 50%;
  background:
    radial-gradient(circle at 55% 50%, #fff 0, #b9e6ef 14%, transparent 34%),
    radial-gradient(circle at 25% 60%, #b8456b 0, transparent 45%),
    radial-gradient(circle at 75% 75%, #3f87b8 0, transparent 50%),
    radial-gradient(circle at 40% 15%, #b2474a 0, transparent 45%),
    radial-gradient(circle at 80% 25%, #2f8d6a 0, transparent 45%),
    #33355e;
}
.date { width: 160px; letter-spacing: .006em; }
.time { width: 117px; letter-spacing: .023em; }

/* Browser window */
.window {
  flex: none;
  height: 1594px;
  display: flex;
  flex-direction: column;
  border-radius: 20px;
  overflow: hidden;
  background: #fff;
}

.tabstrip {
  height: 84px;
  flex: none;
  display: flex;
  align-items: flex-end;
  background: #dfe1e5;
  box-shadow: inset 0 2px #f1f2f4;
  color: #3c4043;
  font-size: 24px;
}
.lights { display: flex; gap: 16px; padding: 0 0 29px 42px; }
.lights i { width: 24px; height: 24px; border-radius: 50%; }
.red { background: #ec6a5e; }
.yellow { background: #f4bd4f; }
.green { background: #61c454; }
.tab {
  height: 68px;
  display: flex;
  align-items: center;
  width: 519px;
  padding: 0 22px 0 65px;
}
.tab.active {
  position: relative;
  width: 479px;
  padding: 0 23px 0 23px;
  background: #fff;
  border-radius: 16px 16px 0 0;
}
.tab.active::before,
.tab.active::after {
  content: "";
  position: absolute;
  bottom: 0;
  width: 16px;
  height: 16px;
}
.tab.active::before { left: -16px; background: radial-gradient(circle at 0 0, transparent 15.5px, #fff 16px); }
.tab.active::after { right: -16px; background: radial-gradient(circle at 100% 0, transparent 15.5px, #fff 16px); }
.gmail { width: 30px; height: 22px; margin-right: 17px; }
.react { width: 32px; height: 32px; margin-right: 16px; }
.tab-title { flex: 1; white-space: nowrap; overflow: hidden; letter-spacing: -.005em; line-height: 32px; }
.faded {
  flex: none;
  width: 350px;
  margin-right: 17px;
  -webkit-mask-image: linear-gradient(90deg, #000 290px, transparent 350px);
  mask-image: linear-gradient(90deg, #000 290px, transparent 350px);
}
.close { width: 18px; height: 18px; stroke: #3c4043; stroke-width: 2.8px; }
.plus { width: 24px; height: 24px; margin: 0 0 22px 32px; }
.chevron { width: 18px; height: 12px; margin: 0 35px 27px auto; }

.toolbar { height: 72px; flex: none; display: flex; align-items: center; padding-left: 24px; }
.nav { width: 39px; height: 39px; margin-right: 25px; fill: #5f6368; }
.nav.disabled { fill: #b9bbbd; }
.omnibox {
  width: 2256px;
  height: 56px;
  margin-right: 28px;
  padding: 0 18px 0 23px;
  display: flex;
  align-items: center;
  border-radius: 28px;
  background: #f1f3f4;
}
.info { width: 27px; height: 27px; margin-right: 18px; }
.url { flex: 1; font-size: 28px; line-height: 34px; color: #202124; }
.url span { color: #5f6368; }
.o-install { width: 28px; height: 26px; margin-right: 39px; }
.o-share { width: 22px; height: 29px; margin-right: 35px; }
.o-star { width: 36px; height: 36px; }
.e-abp { width: 44px; height: 44px; margin: 8px 22px 0 0; }
.e-cookie { width: 30px; height: 28px; margin-right: 31px; }
.e-puzzle { width: 33px; height: 33px; margin-right: 34px; }
.e-panel { width: 28px; height: 28px; margin-right: 28px; }
.avatar {
  width: 44px;
  height: 44px;
  margin-right: 38px;
  border-radius: 50%;
  background: #1d4d40;
  color: #fff;
  font-size: 24px;
  line-height: 44px;
  text-align: center;
}
.e-more { width: 8px; height: 26px; }

.bookmarks {
  height: 66px;
  flex: none;
  display: grid;
  grid-template-columns: 300px 62px 296px 308px 300px 292px 292px 308px 296px 345px 14px;
  align-items: center;
  padding: 0 0 8px 28px;
  border-bottom: 2px solid #dadce0;
  color: #3c4043;
  font-size: 24px;
  letter-spacing: -.007em;
  line-height: 32px;
  white-space: nowrap;
}
.bm { display: flex; align-items: center; gap: 16px; }
.bm svg { width: 32px; height: 32px; }
.more { width: 14px; height: 12px; }

/* Page */
.page { flex: 1; padding-top: 100px; }
.card {
  width: 1680px;
  height: 1142px;
  margin: 0 auto;
  padding: 41px 40px 40px;
  border-radius: 10px;
  background: #f7f7f7;
  box-shadow: 0 4px 8px rgba(0, 0, 0, .1);
}
.fav {
  display: block;
  width: 148px;
  height: 43px;
  padding: 0;
  border: 2px solid #767676;
  border-radius: 5px;
  background: #efefef;
  color: #000;
  font: 26.667px/37px "Liberation Sans", Arial, sans-serif;
}
h2 {
  margin: 42px 0 38px;
  font-size: 48px;
  font-weight: 700;
  line-height: 56px;
  letter-spacing: -.026em;
  color: #333;
}
table {
  width: 1600px;
  table-layout: fixed;
  border-collapse: separate;
  border-spacing: 0;
  font-size: 32px;
  line-height: 38px;
  color: #000;
}
.c-name { width: 371px; }
.c-user { width: 324px; }
.c-mail { width: 476px; }
.c-phone { width: 429px; }
th {
  padding: 21px 20px 19px;
  text-align: left;
  font-weight: 600;
  letter-spacing: -.002em;
  color: #555;
  background: #f1f1f1;
  border-bottom: 4px solid #ddd;
}
th.snug { letter-spacing: -.013em; }
td {
  padding: 21px 20px 19px;
  border-bottom: 2px solid #ddd;
  white-space: nowrap;
  letter-spacing: -.025em;
}
td:nth-child(3) { padding-left: 19px; letter-spacing: -.028em; }
td.wide:nth-child(3) { letter-spacing: -.02em; }
td:nth-child(4) { letter-spacing: -.011em; }
td:first-child { padding: 0; border-bottom: 0; vertical-align: top; letter-spacing: -.022em; }
tbody tr:first-child td:first-child { padding-top: 1px; }
tbody tr:nth-child(even) { background: #f9f9f9; }
a { color: #4f2189; text-decoration-thickness: 3px; text-underline-offset: 3px; }

/* Desktop and dock */
.desktop { position: relative; flex: none; height: 156px; padding-top: 2px; }
.wallpaper { position: absolute; left: 0; bottom: 0; width: 2880px; height: 176px; z-index: -1; }
.dock {
  position: relative;
  width: 1464px;
  height: 144px;
  margin: 0 auto;
  padding-left: 19px;
  display: flex;
  align-items: center;
  border: 2px solid rgba(255, 255, 255, .22);
  border-radius: 42px;
  background: linear-gradient(93deg, #5f577c 0, #61568a 33%, #66569a 55%, #6b569c 64%, #8656b0 76%, #8f57bb 88%, #8f58c0 100%);
  box-shadow: 0 0 80px rgba(0, 0, 0, .25);
}
.app { position: relative; width: 92px; height: 92px; margin: -10px 30px 0 0; flex: none; }
.app svg { width: 92px; height: 92px; filter: drop-shadow(0 1px 2px rgba(0, 0, 0, .3)); }
.running::after {
  content: "";
  position: absolute;
  left: calc(50% - 5px);
  bottom: -27px;
  width: 8px;
  height: 8px;
  border-radius: 50%;
  background: #04000f;
}
.badge {
  position: absolute;
  left: 63px;
  top: -10px;
  width: 43px;
  height: 43px;
  border-radius: 50%;
  background: #e8534a;
  color: #fff;
  font-size: 23px;
  line-height: 43px;
  text-align: center;
}
.sep { width: 2px; height: 108px; margin: 0 31px 0 13px; background: #341a66; flex: none; }
.app.torrent { width: 112px; height: 112px; margin: -12px 20px 0 0; }
.torrent svg { width: 112px; height: 112px; }
.torrent::after { bottom: -18px; }
.thumb { width: 108px; height: 92px; margin: 2px 27px 0 2px; }
.sep:has(+ .thumb) { margin: 0 31px 0 11px; background: #4f1a86; }
.trash { width: 82px; height: 108px; margin-top: -14px; }
```
